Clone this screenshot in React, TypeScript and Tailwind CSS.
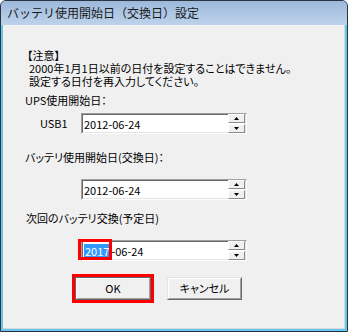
import React from 'react';

const jp = "font-['MS_UI_Gothic','Noto_Sans_CJK_JP',sans-serif] [font-feature-settings:'palt']";

const SpinButton = ({ up }: { up?: boolean }) => (
    <div className="h-[9px] w-[17px] bg-[#f0f0f0] border border-t-white border-l-white border-r-[#8a8a8a] border-b-[#8a8a8a] flex items-center justify-center">
        <svg width="5" height="3" viewBox="0 0 5 3">
            {up ? <path d="M2.5 0 L5 3 L0 3 Z" fill="#000" /> : <path d="M0 0 L5 0 L2.5 3 Z" fill="#000" />}
        </svg>
    </div>
);

const DateBox = ({ children }: { children: React.ReactNode }) => (
    <div className="relative w-[166px] h-[21px] border border-t-[#a0a0a0] border-l-[#a0a0a0] border-r-white border-b-white">
        <div className="w-full h-full border border-t-[#696969] border-l-[#696969] border-r-[#e3e3e3] border-b-[#e3e3e3] bg-white flex items-center justify-between pl-[1px]">
            <div className="text-[11px] leading-[14px] text-black flex items-center">{children}</div>
            <div className="flex flex-col gap-[1px]">
                <SpinButton up />
                <SpinButton />
            </div>
        </div>
    </div>
);

const RaisedButton = ({ label }: { label: string }) => (
    <div className="w-[75px] h-[23px] border border-t-[#e3e3e3] border-l-[#e3e3e3] border-r-[#696969] border-b-[#696969]">
        <div className="w-full h-full border border-t-white border-l-white border-r-[#a0a0a0] border-b-[#a0a0a0] bg-[#f0f0f0] flex items-center justify-center text-[11px] text-black">
            {label}
        </div>
    </div>
);

export default function App() {
    return (
        <div className={`w-[348px] h-[332px] bg-white ${jp}`}>
            <div className="w-full h-full rounded-t-[6px] border border-[#2c3440] bg-[#62c6ee] flex flex-col overflow-hidden">
                <div className="h-[24px] shrink-0 bg-gradient-to-b from-[#9db9db] to-[#bdd3eb] flex items-center pl-[6px] text-[12px] text-[#1a1a1a] [font-feature-settings:normal]">
                    バッテリ使用開始日（交換日）設定
                </div>
                <div className="flex-1 bg-[#f0f0f0] mx-[2px] mb-[2px] border-r border-b border-[#d8d8d8] flex flex-col pt-[24px] pl-[22px] text-[11px] text-black">
                    <div className="leading-[13px] ml-[2px]">
                        <div>【注意】</div>
                        <div className="ml-[2px]">2000年1月1日以前の日付を設定することはできません。</div>
                        <div className="ml-[2px]">設定する日付を再入力してください。</div>
                    </div>
                    <div className="mt-[6px] leading-[12px]">UPS使用開始日：</div>
                    <div className="mt-[7px] flex items-center">
                        <div className="w-[56px] pl-[15px]">USB1</div>
                        <DateBox>2012-06-24</DateBox>
                    </div>
                    <div className="mt-[17px] leading-[12px]">バッテリ使用開始日(交換日)：</div>
                    <div className="mt-[16px] ml-[56px]">
                        <DateBox>2012-06-24</DateBox>
                    </div>
                    <div className="mt-[12px] leading-[12px] ml-[1px]">次回のバッテリ交換(予定日)</div>
                    <div className="mt-[16px] ml-[56px]">
                        <div className="relative">
                            <DateBox>
                                <span className="bg-[#3399ff] text-white pl-[1px] pr-[2px]">2017</span>
                                <span>-06-24</span>
                            </DateBox>
                            <div className="absolute left-[-3px] top-[-1px] w-[34px] h-[21px] border-[3px] border-[#ff0000]" />
                        </div>
                    </div>
                    <div className="mt-[13px] ml-[47px] flex items-center gap-[13px]">
                        <div className="border-[3px] border-[#ff0000]">
                            <div className="border border-[#646464]">
                                <div className="w-[74px] h-[21px] border border-t-white border-l-white border-r-[#a0a0a0] border-b-[#a0a0a0] bg-[#f0f0f0] flex items-center justify-center text-[11px]">
                                    OK
                                </div>
                            </div>
                        </div>
                        <RaisedButton label="キャンセル" />
                    </div>
                </div>
            </div>
        </div>
    );
}
